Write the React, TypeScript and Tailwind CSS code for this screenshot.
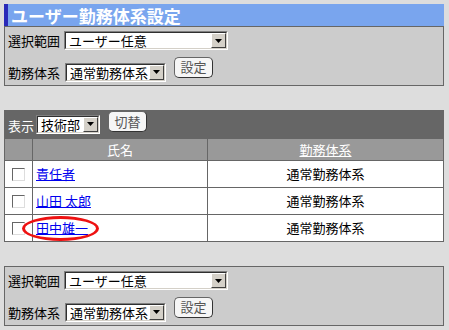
const font = "font-['MS_Gothic','Noto_Sans_CJK_JP',sans-serif]";

function Select({ label, width }: { label: string; width: string }) {
  return (
    <div className={`flex h-[19px] ${width} border border-t-[#808080] border-l-[#808080] border-b-white border-r-white`}>
      <div className="flex flex-1 border border-t-[#303030] border-l-[#303030] border-b-[#d4d0c8] border-r-[#d4d0c8] bg-white">
        <span className="flex-1 pl-[3px] text-[13px] leading-[15px] text-black whitespace-nowrap">{label}</span>
        <div className="flex w-[15px] shrink-0 items-center justify-center bg-[#d4d0c8] border border-t-white border-l-white border-b-[#404040] border-r-[#404040]">
          <svg width="7" height="4" viewBox="0 0 7 4">
            <path d="M0 0h7L3.5 4z" fill="#000" />
          </svg>
        </div>
      </div>
    </div>
  );
}

function Btn({ label, className }: { label: string; className?: string }) {
  return (
    <div className={`flex h-[21px] w-[39px] items-center justify-center rounded-[5px] border border-[#666] border-b-[#333] border-r-[#333] bg-[#f6f6f6] text-[13px] text-[#555] ${className ?? ""}`}>
      {label}
    </div>
  );
}

function Panel({ top }: { top: string }) {
  return (
    <div className={`h-[60px] w-[440px] border border-[#666] bg-[#cccccc] pl-[3px] ${top}`}>
      <div className="flex items-center gap-[4px] pt-[4px]">
        <span className="text-[13px] text-black">選択範囲</span>
        <Select label="ユーザー任意" width="w-[164px]" />
      </div>
      <div className="relative mt-[12px] flex items-center gap-[5px]">
        <span className="text-[13px] text-black">勤務体系</span>
        <Select label="通常勤務体系" width="w-[101px]" />
        <Btn label="設定" className="ml-[3px] -mt-[6px] self-start" />
      </div>
    </div>
  );
}

function Check() {
  return (
    <div className="mx-auto h-[13px] w-[13px] border border-t-[#666] border-l-[#666] border-b-[#ddd] border-r-[#ddd] bg-white" />
  );
}

const rows = ["責任者", "山田 太郎", "田中雄一"];

export default function App() {
  return (
    <div className={`min-h-[330px] w-[449px] bg-[#dddddd] pl-[4px] pt-[4px] ${font}`}>
      <div className="flex h-[22px] w-[440px] items-center border-l-4 border-[#2a2ab8] bg-[#79a5ee] pl-[3px] text-[17px] font-bold leading-none text-white">
        ユーザー勤務体系設定
      </div>
      <Panel top="" />

      <div className="relative mt-[24px] w-[440px]">
        <div className="flex h-[28px] items-center gap-[2px] bg-[#666666] pl-[4px]">
          <span className="mt-[3px] text-[13px] text-white">表示</span>
          <Select label="技術部" width="w-[64px]" />
          <Btn label="切替" className="ml-[6px] -mt-[5px] w-[38px] h-[20px]" />
        </div>
        <table className="w-[440px] border-collapse text-[13px]">
          <tbody>
            <tr className="h-[22px] bg-[#999999] text-white">
              <td className="w-[28px] border border-[#666]"></td>
              <td className="w-[175px] border border-[#666] text-center">氏名</td>
              <td className="border border-[#666] text-center underline">勤務体系</td>
            </tr>
            {rows.map((r) => (
              <tr key={r} className="h-[27px] bg-white">
                <td className="border border-[#666]">
                  <Check />
                </td>
                <td className="border border-[#666] pl-[3px]">
                  <span className="text-[#0000ee] underline">{r}</span>
                </td>
                <td className="border border-[#666] text-center text-black">通常勤務体系</td>
              </tr>
            ))}
          </tbody>
        </table>
        <div className="absolute left-[18px] top-[106px] h-[25px] w-[77px] rounded-[50%] border-[3px] border-[#ee1111]" />
      </div>

      <Panel top="mt-[24px]" />
    </div>
  );
}
